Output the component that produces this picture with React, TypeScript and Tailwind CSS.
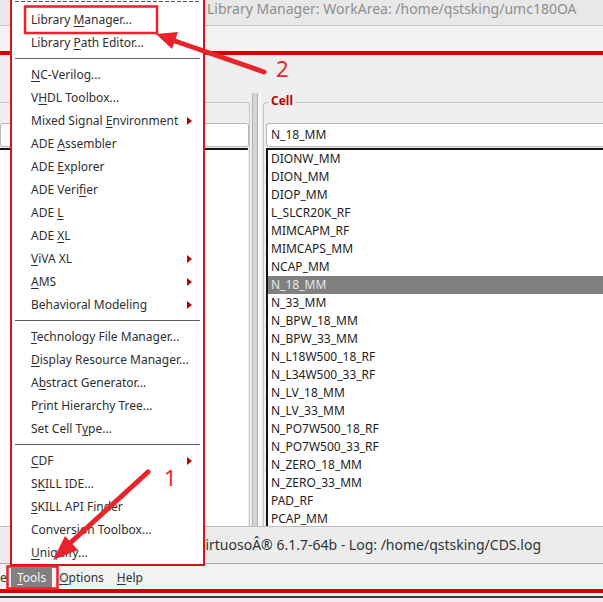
import React from "react";

type Item = { t: string; u: number; sub?: boolean } | { sep: true };

const menu: Item[] = [
  { t: "Library Manager...", u: 8 },
  { t: "Library Path Editor...", u: 8 },
  { sep: true },
  { t: "NC-Verilog...", u: 0 },
  { t: "VHDL Toolbox...", u: 1 },
  { t: "Mixed Signal Environment", u: 13, sub: true },
  { t: "ADE Assembler", u: 4 },
  { t: "ADE Explorer", u: 4 },
  { t: "ADE Verifier", u: 8 },
  { t: "ADE L", u: 4 },
  { t: "ADE XL", u: 4 },
  { t: "ViVA XL", u: 0, sub: true },
  { t: "AMS", u: 0, sub: true },
  { t: "Behavioral Modeling", u: -1, sub: true },
  { sep: true },
  { t: "Technology File Manager...", u: 0 },
  { t: "Display Resource Manager...", u: 0 },
  { t: "Abstract Generator...", u: 1 },
  { t: "Print Hierarchy Tree...", u: 1 },
  { t: "Set Cell Type...", u: 10 },
  { sep: true },
  { t: "CDF", u: 0, sub: true },
  { t: "SKILL IDE...", u: 1 },
  { t: "SKILL API Finder", u: 0 },
  { t: "Conversion Toolbox...", u: -1 },
  { t: "Uniquify...", u: 0 },
];

const cells = [
  "DIONW_MM",
  "DION_MM",
  "DIOP_MM",
  "L_SLCR20K_RF",
  "MIMCAPM_RF",
  "MIMCAPS_MM",
  "NCAP_MM",
  "N_18_MM",
  "N_33_MM",
  "N_BPW_18_MM",
  "N_BPW_33_MM",
  "N_L18W500_18_RF",
  "N_L34W500_33_RF",
  "N_LV_18_MM",
  "N_LV_33_MM",
  "N_PO7W500_18_RF",
  "N_PO7W500_33_RF",
  "N_ZERO_18_MM",
  "N_ZERO_33_MM",
  "PAD_RF",
  "PCAP_MM",
  "PMOS_MM",
];

function Label({ t, u }: { t: string; u: number }) {
  if (u < 0) return <>{t}</>;
  return (
    <>
      {t.slice(0, u)}
      <span className="underline underline-offset-[2px] decoration-[1px]">{t[u]}</span>
      {t.slice(u + 1)}
    </>
  );
}

export default function App() {
  return (
    <div className="relative w-[603px] h-[602px] overflow-hidden bg-[#efefef] font-['Noto_Sans',sans-serif]">
      {/* Library Manager window */}
      <div className="h-[526px] flex flex-col">
        <div className="h-[26px] shrink-0 border-b border-[#c6c6c6] bg-[#e8e8e8] pl-[207px] text-[14px] leading-[17px] text-[#8e8e8e] whitespace-nowrap">
          Library Manager: WorkArea: /home/qstsking/umc180OA
        </div>
        <div className="h-[25px] shrink-0 bg-[#f2f2f2]" />
        <div className="h-[4px] shrink-0 bg-[#d40000]" />
        <div className="flex-1 min-h-0 flex pt-[38px] overflow-hidden">
          {/* Library group */}
          <div className="mt-[9px] w-[250px] shrink-0 border-t border-r border-[#c4c4c4] rounded-tr-[4px] pt-[20px] flex flex-col">
            <div className="h-[24px] bg-white border border-[#b6b6b6] rounded-[3px]" />
            <div className="mt-[1px] mr-[1px] flex-1 bg-white border-t-2 border-[#141414]" />
          </div>
          {/* splitter */}
          <div className="w-[13px] shrink-0 flex pl-[2px]">
            <div className="w-[1px] bg-[#b3b3b3]" />
            <div className="w-[4px] bg-[#d6d6d6]" />
            <div className="w-[1px] bg-[#b3b3b3]" />
            <div className="w-[3px] bg-[#f8f8f8]" />
          </div>
          {/* Cell group */}
          <div className="relative mt-[9px] flex-1 border-l border-t border-[#c4c4c4] rounded-tl-[4px] pl-[2px] pt-[20px] flex flex-col">
            <span className="absolute -top-[10px] left-[5px] px-[2px] bg-[#efefef] text-[12px] font-bold leading-[16px] text-[#c00000]">
              Cell
            </span>
            <div className="h-[24px] bg-white border border-[#b6b6b6] border-r-0 rounded-l-[3px] pl-[4px] text-[12px] leading-[22px] text-[#1e1e1e]">
              N_18_MM
            </div>
            <div className="mt-[1px] flex-1 bg-white border-l-2 border-t-2 border-[#141414] overflow-hidden">
              {cells.map((c) => (
                <div
                  key={c}
                  className={
                    c === "N_18_MM"
                      ? "h-[18px] leading-[18px] pl-[3px] text-[12px] bg-[#808080] text-[#e6e6e6]"
                      : "h-[18px] leading-[18px] pl-[3px] text-[12px] text-[#1e1e1e]"
                  }
                >
                  {c}
                </div>
              ))}
            </div>
          </div>
        </div>
      </div>

      {/* CIW window */}
      <div className="h-[38px] border-t border-b border-t-[#bdbdbd] border-b-[#ababab] bg-[#ececec] pl-[197px] text-[14px] leading-[36px] text-[#2e3436] whitespace-nowrap">
        VirtuosoÂ® 6.1.7-64b - Log: /home/qstsking/CDS.log
      </div>
      <div className="h-[25px] bg-[#f2f2f2] flex items-center text-[12px] text-[#2e3436] pt-[2px]">
        <span className="w-[11px] leading-[20px]">e</span>
        <span className="h-[20px] leading-[20px] px-[6px] bg-[#808080] text-[#f4f4f4]">
          <Label t="Tools" u={0} />
        </span>
        <span className="ml-[1px] h-[20px] leading-[20px] px-[6px]">
          <Label t="Options" u={0} />
        </span>
        <span className="ml-[1px] h-[20px] leading-[20px] px-[6px]">
          <Label t="Help" u={0} />
        </span>
      </div>
      <div className="h-[4px] bg-[#d40000]" />
      <div className="h-[3px] bg-[#efefef]" />
      <div className="h-[2px] bg-[#3a3a3a]" />

      {/* Tools dropdown menu */}
      <div className="absolute left-[10px] top-[-2px] w-[195px] h-[568px] border-2 border-[#d7141a] bg-white text-[12px] text-[#2f2f2f]">
        <div className="h-[8px] pt-[1px] px-[3px]">
          <div className="h-[1px] bg-[repeating-linear-gradient(90deg,#555_0_4px,transparent_4px_6px)]" />
        </div>
        {menu.map((m, i) =>
          "sep" in m ? (
            <div key={i} className="h-[9px] flex items-center px-[3px]">
              <div className="h-[1px] w-full bg-[#5e5e5e]" />
            </div>
          ) : (
            <div key={i} className="relative h-[23px] leading-[23px] pl-[19px] whitespace-nowrap">
              <Label t={m.t} u={m.u} />
              {m.sub && (
                <span className="absolute right-[11px] top-[8px] w-0 h-0 border-y-[4px] border-y-transparent border-l-[5px] border-l-[#b80000]" />
              )}
            </div>
          )
        )}
      </div>

      {/* annotations */}
      <svg className="absolute inset-0 pointer-events-none" width="603" height="602" viewBox="0 0 603 602">
        <rect x="25" y="6.5" width="132" height="26.5" fill="none" stroke="#e8232b" strokeWidth="2.5" />
        <line x1="264" y1="72" x2="172" y2="40" stroke="#e8232b" strokeWidth="5" strokeLinecap="round" />
        <polygon points="156,34 178,32 172,49" fill="#e8232b" />
        <text x="276" y="77" fontSize="22" fill="#e8232b" fontFamily="Noto Sans, sans-serif">2</text>

        <line x1="148" y1="472" x2="68" y2="545" stroke="#e8232b" strokeWidth="5" strokeLinecap="round" />
        <polygon points="53,560 65,536 78,550" fill="#e8232b" />
        <text x="164" y="486" fontSize="22" fill="#e8232b" fontFamily="Noto Sans, sans-serif">1</text>

        <rect x="7.5" y="566.5" width="50" height="22" fill="none" stroke="#e8232b" strokeWidth="2.5" />
      </svg>
    </div>
  );
}
